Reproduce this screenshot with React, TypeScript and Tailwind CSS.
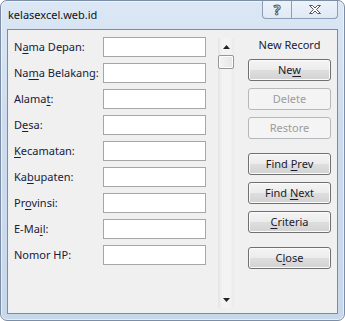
import React from 'react';

type Parts = [string, string, string];

const fields: Parts[] = [
  ['N', 'a', 'ma Depan:'],
  ['Na', 'm', 'a Belakang:'],
  ['Alama', 't', ':'],
  ['D', 'e', 'sa:'],
  ['', 'K', 'ecamatan:'],
  ['Ka', 'b', 'upaten:'],
  ['Pr', 'o', 'vinsi:'],
  ['E-Ma', 'i', 'l:'],
  ['Nomor HP:', '', ''],
];

const Label = ({ parts }: { parts: Parts }) => (
  <span className="whitespace-pre">
    {parts[0]}
    {parts[1] && <span className="underline underline-offset-[2px]">{parts[1]}</span>}
    {parts[2]}
  </span>
);

const Btn = ({ parts, disabled, className = '' }: { parts: Parts; disabled?: boolean; className?: string }) => (
  <div
    className={
      'flex h-[22px] w-[83px] items-center justify-center rounded-[3px] border ' +
      (disabled
        ? 'border-[#b5b9bc] bg-[#f4f4f4] text-[#9c9c9c] '
        : 'border-[#707070] bg-[linear-gradient(to_bottom,#f4f4f4_0%,#ececec_48%,#dedede_52%,#d2d2d2_100%)] text-[#1b1b2e] shadow-[inset_0_0_0_1px_#fbfbfb] ') +
      className
    }
  >
    <Label parts={parts} />
  </div>
);

const App: React.FC = () => {
  return (
    <div className="h-[321px] w-[345px] bg-white font-['Noto_Sans',sans-serif] text-[11px]">
      <div className="flex h-full w-full flex-col rounded-[7px] border border-[#7c8da6] bg-[linear-gradient(to_bottom,#dbe7f5,#cddced_40%,#c8d8eb)] shadow-[inset_0_0_0_1px_rgba(255,255,255,0.55)]">
        {/* title bar */}
        <div className="flex h-[28px] items-start">
          <div className="pl-[7px] pt-[6px] leading-[16px] text-[#111]">kelasexcel.web.id</div>
          <div className="ml-auto mr-[6px] flex h-[18px]">
            <div className="flex w-[30px] items-center justify-center rounded-bl-[4px] border border-t-0 border-[#8c9db5] bg-[linear-gradient(to_bottom,#eef3fa,#dfe8f4)] text-[14px] font-bold leading-none text-white [-webkit-text-stroke:1px_#555]">
              ?
            </div>
            <div className="flex w-[46px] items-center justify-center rounded-br-[4px] border border-l-0 border-t-0 border-[#8c9db5] bg-[linear-gradient(to_bottom,#eef3fa,#dfe8f4)]">
              <svg width="14" height="11" viewBox="0 0 14 11">
                <path
                  d="M1.5 1.5h3l2.5 2.5 2.5-2.5h3l-4 4 4 4h-3l-2.5-2.5-2.5 2.5h-3l4-4z"
                  fill="#fff"
                  stroke="#555"
                  strokeWidth="1"
                  strokeLinejoin="round"
                />
              </svg>
            </div>
          </div>
        </div>

        {/* client area */}
        <div className="mx-[6px] flex h-[285px] border border-[#818a97] bg-[#f0f0f0] text-[#17203a]">
          <div className="flex flex-col gap-[6px] pl-[6px] pt-[7px]">
            {fields.map((f, i) => (
              <div key={i} className="flex h-[20px] items-center">
                <div className="w-[89px] leading-[20px]">
                  <Label parts={f} />
                </div>
                <div className="h-[20px] w-[103px] border border-[#a6a6a6] bg-white" />
              </div>
            ))}
          </div>

          {/* scrollbar */}
          <div className="ml-[12px] mt-[8px] flex h-[270px] w-[16px] flex-col bg-[linear-gradient(to_right,#e4e4e4,#f3f3f3_25%,#f3f3f3_75%,#e9e9e9)]">
            <div className="flex h-[17px] items-center justify-center">
              <svg width="7" height="4" viewBox="0 0 7 4">
                <path d="M3.5 0L7 4H0z" fill="#222" />
              </svg>
            </div>
            <div className="mx-0 h-[14px] rounded-[2px] border border-[#979797] bg-[linear-gradient(to_right,#f5f5f5,#e6e6e6)] shadow-[inset_0_0_0_1px_#fdfdfd]" />
            <div className="flex-1" />
            <div className="flex h-[17px] items-center justify-center">
              <svg width="7" height="4" viewBox="0 0 7 4">
                <path d="M0 0H7L3.5 4z" fill="#222" />
              </svg>
            </div>
          </div>

          {/* buttons */}
          <div className="ml-[14px] flex w-[83px] flex-col items-center pt-[7px]">
            <div className="h-[16px] leading-[16px]">New Record</div>
            <Btn parts={['Ne', 'w', '']} className="mt-[6px]" />
            <Btn parts={['Delete', '', '']} disabled className="mt-[7px]" />
            <Btn parts={['Restore', '', '']} disabled className="mt-[7px]" />
            <Btn parts={['Find ', 'P', 'rev']} className="mt-[14px]" />
            <Btn parts={['Find ', 'N', 'ext']} className="mt-[7px]" />
            <Btn parts={['', 'C', 'riteria']} className="mt-[7px]" />
            <Btn parts={['C', 'l', 'ose']} className="mt-[14px]" />
          </div>
        </div>
      </div>
    </div>
  );
};

export default App;
